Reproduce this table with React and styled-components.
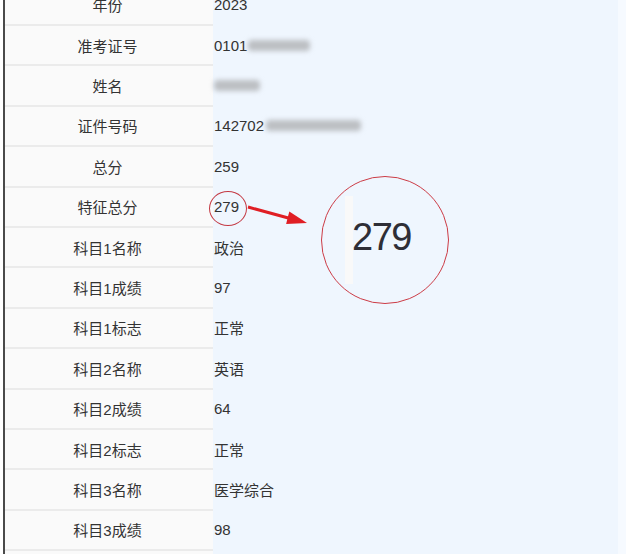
import React from "react";
import styled, { createGlobalStyle } from "styled-components";

const Global = createGlobalStyle`
  html, body { margin: 0; padding: 0; background: #ffffff; }
  body { width: 626px; height: 554px; overflow: hidden; }
`;

const Page = styled.div`
  position: relative;
  display: flex;
  width: 626px;
  height: 554px;
  overflow: hidden;
  font-family: "Liberation Sans", "Noto Sans CJK SC", sans-serif;
  font-size: 15px;
  color: #333333;
`;

const Gutter = styled.div`
  width: 3px;
  flex: none;
  background: #ffffff;
`;

const Rule = styled.div`
  width: 2px;
  flex: none;
  background: #4a4a4a;
`;

const Table = styled.div`
  flex: 1;
  display: flex;
  flex-direction: column;
  margin-top: -16.4px;
  background: #eff6fe;
`;

const RightEdge = styled.div`
  width: 8px;
  flex: none;
  background: #f6faff;
`;

const Row = styled.div`
  display: flex;
  flex: none;
  height: 40.4px;
`;

const Label = styled.div`
  box-sizing: border-box;
  width: 208px;
  flex: none;
  display: flex;
  align-items: center;
  justify-content: center;
  padding-right: 3px;
  background: #fafafa;
  border-top: 2px solid #ebebeb;
`;

const Value = styled.div`
  box-sizing: border-box;
  flex: 1;
  display: flex;
  align-items: center;
  padding-top: 2px;
  padding-left: 1px;
`;

const Blur = styled.span`
  display: inline-block;
  width: ${(p) => p.$w}px;
  height: 11px;
  margin-left: ${(p) => p.$ml || 0}px;
  border-radius: 4px;
  background: #bcbfc3;
  filter: blur(2.5px);
`;

const SmallRing = styled.div`
  position: absolute;
  left: 209px;
  top: 191px;
  width: 36px;
  height: 33px;
  border: 1px solid #c43a44;
  border-radius: 50%;
`;

const Arrow = styled.svg`
  position: absolute;
  left: 0;
  top: 0;
  pointer-events: none;
`;

const Magnifier = styled.div`
  position: absolute;
  left: 321px;
  top: 176px;
  width: 126px;
  height: 126px;
  border: 1px solid #cc3c46;
  border-radius: 50%;
  background: #eff6fe;
  overflow: hidden;
`;

const MagStrip = styled.div`
  position: absolute;
  left: 23px;
  top: 19px;
  width: 8px;
  height: 88px;
  background: #f9f9f9;
`;

const MagText = styled.div`
  position: absolute;
  left: 30px;
  top: 38px;
  font-size: 38px;
  letter-spacing: -1.5px;
  line-height: 44px;
  color: #2e2e36;
`;

const rows = [
  ["年份", "2023"],
  ["准考证号", <>0101<Blur $w={62} $ml={1} /></>],
  ["姓名", <Blur $w={46} />],
  ["证件号码", <>142702<Blur $w={95} $ml={2} /></>],
  ["总分", "259"],
  ["特征总分", "279"],
  ["科目1名称", "政治"],
  ["科目1成绩", "97"],
  ["科目1标志", "正常"],
  ["科目2名称", "英语"],
  ["科目2成绩", "64"],
  ["科目2标志", "正常"],
  ["科目3名称", "医学综合"],
  ["科目3成绩", "98"],
  ["", ""],
];

export default function App() {
  return (
    <>
      <Global />
      <Page>
        <Gutter />
        <Rule />
        <Table>
          {rows.map(([k, v], i) => (
            <Row key={i}>
              <Label>{k}</Label>
              <Value>{v}</Value>
            </Row>
          ))}
        </Table>
        <RightEdge />
        <SmallRing />
        <Arrow width="626" height="554" viewBox="0 0 626 554">
          <line x1="248" y1="207" x2="292" y2="219" stroke="#e01e24" strokeWidth="3" />
          <polygon points="307,223 289.3,211.6 286.1,224" fill="#e01e24" />
        </Arrow>
        <Magnifier>
          <MagStrip />
          <MagText>279</MagText>
        </Magnifier>
      </Page>
    </>
  );
}
